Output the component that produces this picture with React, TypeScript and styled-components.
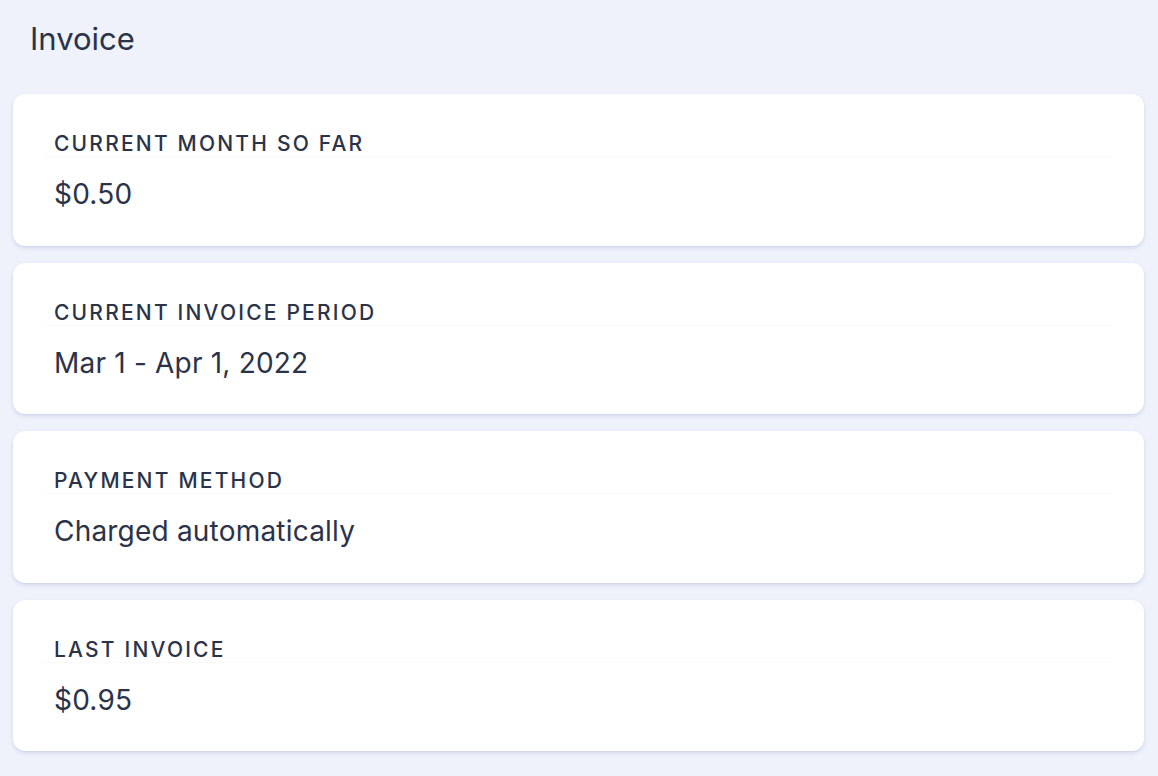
import styled, { createGlobalStyle } from "styled-components";

const textColor = "#2b3349";

const GlobalStyle = createGlobalStyle`
    html, body {
        margin: 0;
        padding: 0;
        background: #eff2fb;
    }

    body {
        font-family: Inter, "Noto Sans", sans-serif;
        color: ${textColor};
        -webkit-font-smoothing: antialiased;
    }
`;

const items = [
    { label: "Current month so far", value: "$0.50" },
    { label: "Current invoice period", value: "Mar 1 - Apr 1, 2022" },
    { label: "Payment method", value: "Charged automatically" },
    { label: "Last invoice", value: "$0.95" },
];

const App = () => {
    return (
        <>
            <GlobalStyle />
            <Page>
                <Title>Invoice</Title>
                <CardList>
                    {items.map((item) => (
                        <Card key={item.label}>
                            <Label>{item.label}</Label>
                            <Value>{item.value}</Value>
                        </Card>
                    ))}
                </CardList>
            </Page>
        </>
    );
};

const Page = styled.div`
    display: flex;
    flex-direction: column;

    padding: 20px 14px 24px 13px;
    min-height: 776px;
    box-sizing: border-box;
`;

const Title = styled.h1`
    margin: 0 0 36px 17px;

    font-size: 31px;
    line-height: 38px;
    font-weight: 400;
`;

const CardList = styled.div`
    display: flex;
    flex-direction: column;
    gap: 17px;
`;

const Card = styled.section`
    display: flex;
    flex-direction: column;

    padding: 37px 41px 34.5px;

    background: white;
    border-radius: 12px;
    box-shadow: 0 2px 4px rgba(140, 155, 205, 0.28),
        0 1px 1px rgba(140, 155, 205, 0.12);
`;

const Label = styled.div`
    font-size: 21px;
    line-height: 25px;
    font-weight: 500;
    letter-spacing: 2.2px;
    text-transform: uppercase;

    border-bottom: 1px solid #f8f9fc;
    margin: 0 -11px;
    padding: 0 11px;
`;

const Value = styled.div`
    margin-top: 20px;

    font-size: 28px;
    line-height: 34px;
    font-weight: 400;
    letter-spacing: 0.2px;
`;

export default App;
